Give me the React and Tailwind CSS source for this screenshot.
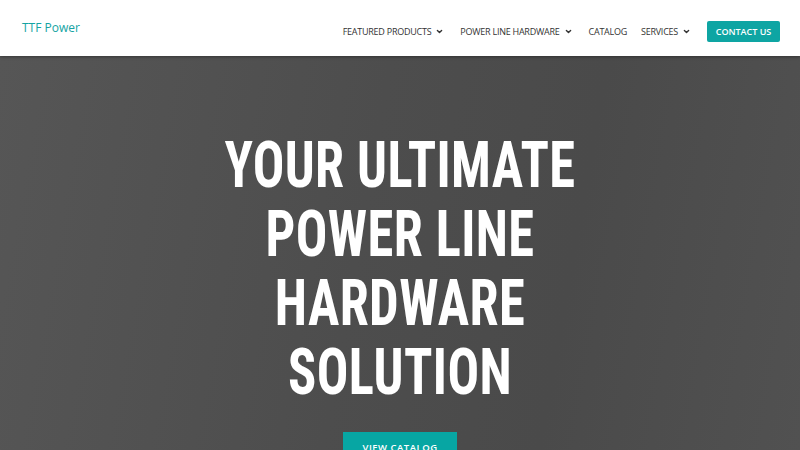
import React from "react";

function Chevron() {
  return (
    <svg width="7" height="7" viewBox="0 0 10 10" className="ml-[5px]" fill="none" stroke="#333" strokeWidth="2" strokeLinecap="round" strokeLinejoin="round">
      <path d="M2 3.5 L5 6.5 L8 3.5" />
    </svg>
  );
}

export default function App() {
  const nav = "flex items-center text-[9px] text-[#333] tracking-[-0.25px]";
  return (
    <div className="w-[800px] h-[450px] overflow-hidden bg-[#4b4b4b]" style={{ fontFamily: '"Open Sans", sans-serif' }}>
      <header className="relative z-10 h-[56px] bg-white flex items-start justify-between pl-[22px] pr-[20px] shadow-[0_1px_3px_rgba(0,0,0,0.35)]">
        <div className="mt-[20px] text-[12px] leading-[16px] text-[#14a3a3]">TTF Power</div>
        <nav className="mt-[21px] h-[21px] flex items-center">
          <div className={nav}>FEATURED PRODUCTS<Chevron /></div>
          <div className={nav + " ml-[17px]"}>POWER LINE HARDWARE<Chevron /></div>
          <div className={nav + " ml-[17px]"}>CATALOG</div>
          <div className={nav + " ml-[14px]"}>SERVICES<Chevron /></div>
          <div className="ml-[17px] h-[21px] w-[73px] rounded-[2px] bg-[#0ea5a3] text-white text-[9px] font-semibold flex items-center justify-center">CONTACT US</div>
        </nav>
      </header>
      <section className="h-[394px] bg-[linear-gradient(100deg,#565656_0%,#4d4d4d_45%,#4a4a4a_70%,#515151_100%)] flex flex-col items-center pt-[75px]">
        <h1 className="text-white text-[64px] leading-[69px] font-bold text-center tracking-[0.5px] scale-x-[0.82]" style={{ fontFamily: '"Roboto Condensed", Roboto, sans-serif' }}>
          YOUR ULTIMATE<br />POWER LINE<br />HARDWARE<br />SOLUTION
        </h1>
        <div className="mt-[25px] w-[114px] h-[40px] bg-[#07a6a3] text-white text-[9.5px] font-semibold flex items-start justify-center pt-[9px] tracking-[0.5px]">VIEW CATALOG</div>
      </section>
    </div>
  );
}
